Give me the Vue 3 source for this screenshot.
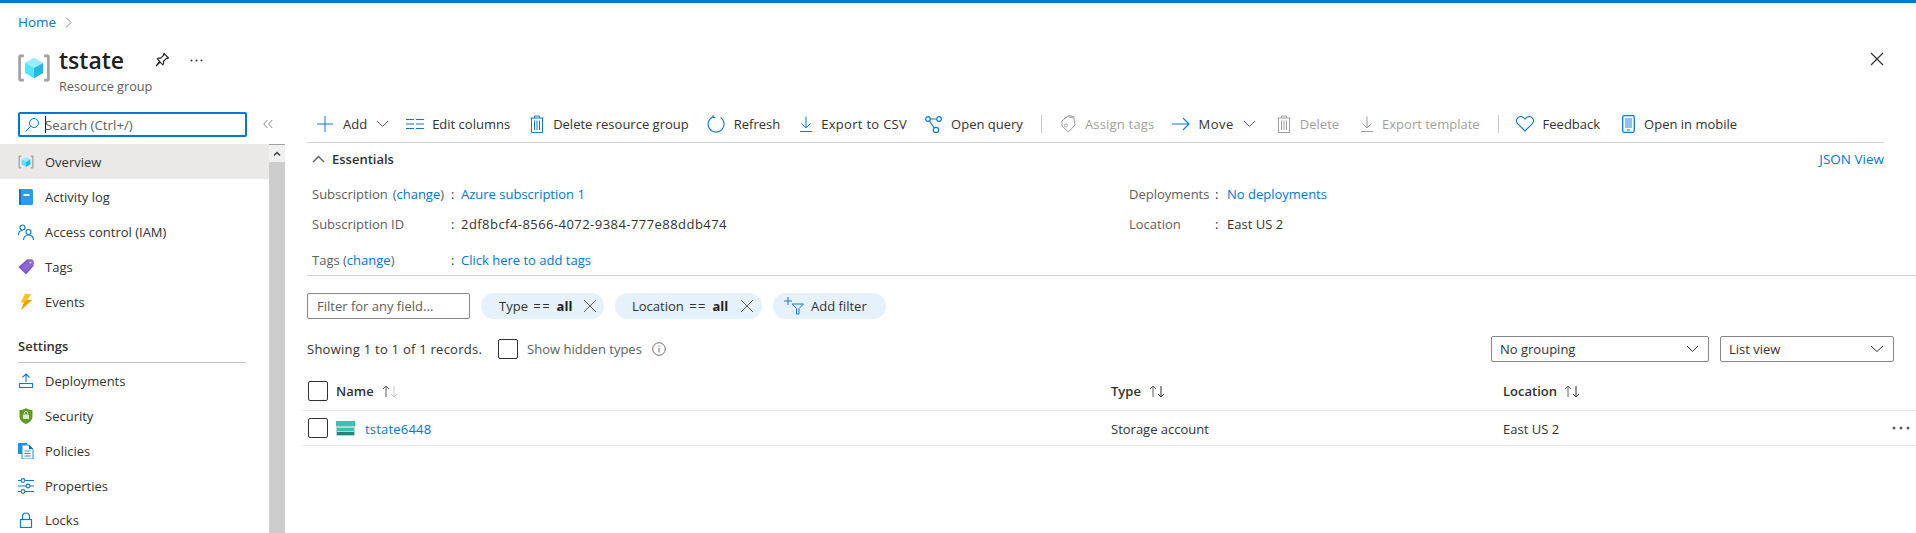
<script setup>
const nav1 = [
  { k: 'overview', t: 'Overview', active: true },
  { k: 'log', t: 'Activity log' },
  { k: 'iam', t: 'Access control (IAM)' },
  { k: 'tags', t: 'Tags' },
  { k: 'events', t: 'Events' },
]
const nav2 = [
  { k: 'deploy', t: 'Deployments' },
  { k: 'security', t: 'Security' },
  { k: 'policies', t: 'Policies' },
  { k: 'props', t: 'Properties' },
  { k: 'locks', t: 'Locks' },
]
</script>

<template>
  <div class="page">
    <div class="topline"></div>
    <div class="crumb"><a class="link">Home</a>
      <svg class="crumb-chev" width="7" height="11" viewBox="0 0 7 11"><path d="M1 .5l5 5-5 5" fill="none" stroke="#8a8886" stroke-width="1"/></svg>
    </div>
    <header class="head">
      <svg class="rg" width="36" height="36" viewBox="0 0 32 32">
        <path d="M7 4H4a2 2 0 0 0-2 2v20a2 2 0 0 0 2 2h3v-2.400H4.400V6.400H7z" fill="#a0a1a2"/>
        <path d="M25 4h3a2 2 0 0 1 2 2v20a2 2 0 0 1-2 2h-3v-2.400h2.600V6.400H25z" fill="#a0a1a2"/>
        <path d="M16 7l8 4.500v9L16 25l-8-4.500v-9z" fill="#50e6ff"/>
        <path d="M16 16l8-4.500v9L16 25z" fill="#29b6e0"/>
        <path d="M16 16l-8-4.500L16 7l8 4.500z" fill="#9cebff"/>
      </svg>
      <div class="titles">
        <div class="title-row">
          <h1>tstate</h1>
          <svg class="pin" width="16" height="16" viewBox="0 0 16 16"><path d="M10 1.500l4.500 4.500-1 .6-1-.3-3 3 .1 2.500-.9.9-2.500-2.500L2 14l3.700-4.700L3.300 6.900l.9-.9 2.500.1 3-3-.3-1z" fill="none" stroke="#201f1e" stroke-width="1.100"/></svg>
          <svg class="more" width="13" height="3" viewBox="0 0 13 3"><circle cx="1.500" cy="1.500" r="1" fill="#323130"/><circle cx="6.500" cy="1.500" r="1" fill="#323130"/><circle cx="11.500" cy="1.500" r="1" fill="#323130"/></svg>
        </div>
        <div class="sub">Resource group</div>
      </div>
      <svg class="close" width="14" height="14" viewBox="0 0 14 14"><path d="M1 1l12 12M13 1L1 13" stroke="#323130" stroke-width="1.200"/></svg>
    </header>

    <div class="body">
      <aside class="side">
        <div class="search-row">
          <div class="search">
            <svg width="16" height="16" viewBox="0 0 16 16"><circle cx="10" cy="6" r="4.500" fill="none" stroke="#0078d4"/><path d="M6.700 9.300L1.500 14.500" stroke="#0078d4"/></svg>
            <span class="caret"></span><span class="ph">Search (Ctrl+/)</span>
          </div>
          <svg class="collapse" width="10" height="10" viewBox="0 0 10 10"><path d="M4.500 1L.8 5l3.700 4M9.200 1L5.500 5l3.700 4" fill="none" stroke="#8a8886"/></svg>
        </div>
        <div class="navwrap">
          <nav class="nav">
            <template v-for="n in nav1" :key="n.k">
              <div class="item" :class="{ active: n.active }">
                <span class="ni">
                  <svg v-if="n.k === 'overview'" width="16" height="16" viewBox="1 1 30 30">
                    <path d="M7 4H4a2 2 0 0 0-2 2v20a2 2 0 0 0 2 2h3v-2.400H4.400V6.400H7z" fill="#a0a1a2"/><path d="M25 4h3a2 2 0 0 1 2 2v20a2 2 0 0 1-2 2h-3v-2.400h2.600V6.400H25z" fill="#a0a1a2"/>
                    <path d="M16 7l8 4.500v9L16 25l-8-4.500v-9z" fill="#50e6ff"/><path d="M16 16l8-4.500v9L16 25z" fill="#29b6e0"/><path d="M16 16l-8-4.500L16 7l8 4.500z" fill="#9cebff"/>
                  </svg>
                  <svg v-else-if="n.k === 'log'" width="16" height="16" viewBox="0 0 16 16">
                    <rect x="1" y="0" width="14" height="16" rx="1.500" fill="#2f9be8"/><rect x="1" y="0" width="2" height="16" rx="1" fill="#1a6fb5"/><rect x="5.500" y="5" width="6" height="2" fill="#fff"/>
                  </svg>
                  <svg v-else-if="n.k === 'iam'" width="16" height="16" viewBox="0 0 16 16" fill="none" stroke="#0f78d4" stroke-width="1.100">
                    <circle cx="4.500" cy="3.500" r="2.500"/><path d="M.5 11c0-3 1.500-4.500 4-4.500"/><circle cx="10.500" cy="8" r="2.500"/><path d="M5.500 16c0-3 2-5 5-5s5 2 5 5"/>
                  </svg>
                  <svg v-else-if="n.k === 'tags'" width="16" height="16" viewBox="0 0 16 16">
                    <path d="M9 .5h4.500a2 2 0 0 1 2 2V7L8 15.500.5 8z" fill="#7b52c9"/><path d="M11 .5h2.500a2 2 0 0 1 2 2V5L8 13 3 8z" fill="#8d67d9"/><circle cx="12.500" cy="3.500" r="1.100" fill="#d9c8f5"/>
                  </svg>
                  <svg v-else width="16" height="16" viewBox="0 0 16 16">
                    <path d="M7 0h6L9.500 6H14L3 16l3-7.500H2.500z" fill="#fcc419"/><path d="M9.500 6H14L3 16l3-7.500z" fill="#f59c0c"/>
                  </svg>
                </span>
                <span>{{ n.t }}</span>
              </div>
            </template>
            <div class="group">Settings</div>
            <div class="groupline"></div>
            <div v-for="n in nav2" :key="n.k" class="item tight">
              <span class="ni">
                <svg v-if="n.k === 'deploy'" width="16" height="16" viewBox="0 0 16 16" fill="none" stroke="#0f78d4" stroke-width="1.100">
                  <rect x="1.500" y="10.500" width="13" height="4"/><path d="M8 9V1M4.500 4.500L8 1l3.500 3.500"/>
                </svg>
                <svg v-else-if="n.k === 'security'" width="16" height="16" viewBox="0 0 16 16">
                  <path d="M8 0c2 1.500 3.800 2 6.500 2v6.500c0 3.500-3 6-6.500 7.500-3.500-1.500-6.500-4-6.500-7.500V2C4.200 2 6 1.500 8 0z" fill="#5e9c25"/>
                  <rect x="5" y="6.500" width="6" height="4.500" rx=".5" fill="#dcedc8"/><path d="M6.300 6.500V5.200a1.700 1.700 0 0 1 3.400 0v1.300" fill="none" stroke="#dcedc8"/>
                </svg>
                <svg v-else-if="n.k === 'policies'" width="16" height="16" viewBox="0 0 16 16">
                  <path d="M0 0h9v11H0z" fill="#1b93eb"/><path d="M4 2h7l4 4v10H4z" fill="#fff" stroke="#1b93eb"/><path d="M6.500 8h6M6.500 10.500h6M6.500 13h6" stroke="#1b93eb"/><path d="M11 2l4 4h-4z" fill="#0f6fc0"/>
                </svg>
                <svg v-else-if="n.k === 'props'" width="16" height="16" viewBox="0 0 16 16" fill="none" stroke="#0f78d4" stroke-width="1.100">
                  <path d="M0 2.500h3M7 2.500h9M0 8h8M12 8h4M0 13.500h3M7 13.500h9"/><circle cx="5" cy="2.500" r="1.900"/><circle cx="10" cy="8" r="1.900"/><circle cx="5" cy="13.500" r="1.900"/>
                </svg>
                <svg v-else width="16" height="16" viewBox="0 0 16 16" fill="none" stroke="#0f78d4" stroke-width="1.200">
                  <rect x="2.500" y="7.500" width="11" height="8"/><path d="M4.500 7.500V4.500a3.500 3.500 0 0 1 7 0v3"/>
                </svg>
              </span>
              <span>{{ n.t }}</span>
            </div>
          </nav>
          <div class="scroll">
            <div class="sbtn"><svg width="8" height="6" viewBox="0 0 8 6"><path d="M1 4.500L4 1.500l3 3" fill="none" stroke="#404040" stroke-width="1.500"/></svg></div>
            <div class="thumb"></div>
          </div>
        </div>
      </aside>

      <main class="main">
        <div class="toolbar">
          <button class="tb t-add">
            <svg width="18" height="18" viewBox="0 0 18 18"><path d="M9 1v16M1 9h16" stroke="#0f78d4"/></svg><span>Add</span>
            <svg class="chev" width="13" height="8" viewBox="0 0 13 8"><path d="M1 1l5.500 5.500L12 1" fill="none" stroke="#605e5c"/></svg>
          </button>
          <button class="tb t-edit">
            <svg width="18" height="14" viewBox="0 0 18 14"><path d="M0 2.500h8M10 2.500h8M0 7h8M10 7h8M0 11.500h8M10 11.500h8" stroke="#0f78d4"/></svg><span>Edit columns</span>
          </button>
          <button class="tb">
            <svg width="14" height="18" viewBox="0 0 14 18" fill="none" stroke="#0f78d4"><path d="M.5 3h13M4.500 3V1h5v2M1.500 3v14.500h11V3M4.500 5.500v9.500M7 5.500v9.500M9.500 5.500v9.500"/></svg><span>Delete resource group</span>
          </button>
          <button class="tb t-refresh">
            <svg width="18" height="18" viewBox="0 0 18 18" fill="none" stroke="#0f78d4" stroke-width="1.100"><path d="M5 2.200A8 8 0 1 0 12.500 1.800M5 .5v2.300h2.400" transform="rotate(8 9 9)"/></svg><span>Refresh</span>
          </button>
          <button class="tb t-csv">
            <svg width="12" height="16" viewBox="0 0 12 16" fill="none" stroke="#0f78d4"><path d="M6 .5V12M1.500 7.500L6 12l4.500-4.500M0 15.500h12"/></svg><span>Export to CSV</span>
          </button>
          <button class="tb">
            <svg width="17" height="17" viewBox="0 0 17 17" fill="none" stroke="#0f78d4" stroke-width="1.200"><circle cx="3" cy="3" r="2.300"/><circle cx="14" cy="3" r="2.300"/><circle cx="11" cy="14" r="2.700"/><path d="M5.300 3h6.400M4.500 5l4.800 7"/></svg><span>Open query</span>
          </button>
          <span class="sep"></span>
          <button class="tb dis t-assign">
            <svg width="15" height="18" viewBox="0 0 15 18" fill="none" stroke="#a19f9d"><path d="M1 6l5-4.500 7 1.500 1 7L7.500 17 1 11z"/><path d="M3 4l5-3.500 5.500 1.500M5 9a1.500 1.500 0 1 0 .1 0"/></svg><span>Assign tags</span>
          </button>
          <button class="tb t-move">
            <svg width="18" height="14" viewBox="0 0 18 14" fill="none" stroke="#0f78d4" stroke-width="1.100"><path d="M0 7h17M11 1l6 6-6 6"/></svg><span>Move</span>
            <svg class="chev" width="13" height="8" viewBox="0 0 13 8"><path d="M1 1l5.500 5.500L12 1" fill="none" stroke="#605e5c"/></svg>
          </button>
          <button class="tb dis t-del2">
            <svg width="14" height="18" viewBox="0 0 14 18" fill="none" stroke="#a19f9d"><path d="M.5 3h13M4.500 3V1h5v2M1.500 3v14.500h11V3M4.500 5.500v9.500M7 5.500v9.500M9.500 5.500v9.500"/></svg><span>Delete</span>
          </button>
          <button class="tb dis">
            <svg width="12" height="16" viewBox="0 0 12 16" fill="none" stroke="#a19f9d"><path d="M6 .5V12M1.500 7.500L6 12l4.500-4.500M0 15.500h12"/></svg><span>Export template</span>
          </button>
          <span class="sep sep2"></span>
          <button class="tb t-feed">
            <svg width="18" height="16" viewBox="0 0 18 16" fill="none" stroke="#0f78d4" stroke-width="1.200"><path d="M9 15L1.800 7.800a4.200 4.200 0 0 1 6-6L9 3l1.200-1.200a4.200 4.200 0 0 1 6 6z"/></svg><span>Feedback</span>
          </button>
          <button class="tb">
            <svg width="13" height="18" viewBox="0 0 13 18"><rect x=".7" y=".7" width="11.600" height="16.600" rx="1.500" fill="none" stroke="#0f78d4" stroke-width="1.300"/><rect x="3" y="3" width="7" height="10" fill="#8cc4ee"/><path d="M5 15h3" stroke="#0f78d4"/></svg><span>Open in mobile</span>
          </button>
        </div>

        <div class="ess-head">
          <svg width="13" height="8" viewBox="0 0 13 8"><path d="M1 7l5.500-5.500L12 7" fill="none" stroke="#605e5c" stroke-width="1.400"/></svg>
          <span class="ess-title">Essentials</span>
          <a class="link json">JSON View</a>
        </div>

        <div class="ess">
          <div class="col col-l">
            <div class="kv h30"><span class="k">Subscription <span class="k2 k2-sub">(<a class="link">change</a>)</span></span><span class="c">:</span><a class="link">Azure subscription 1</a></div>
            <div class="kv h30"><span class="k">Subscription ID</span><span class="c">:</span><span class="v guid">2df8bcf4-8566-4072-9384-777e88ddb474</span></div>
            <div class="kv h30 tagsrow"><span class="k">Tags <span class="k2">(<a class="link">change</a>)</span></span><span class="c">:</span><a class="link">Click here to add tags</a></div>
          </div>
          <div class="col col-r">
            <div class="kv2 h30"><span class="k">Deployments</span><span class="c">:</span><a class="link">No deployments</a></div>
            <div class="kv2 h30"><span class="k">Location</span><span class="c">:</span><span class="v">East US 2</span></div>
          </div>
        </div>

        <div class="filters">
          <div class="filter-input">Filter for any field...</div>
          <div class="pill p-type"><span>Type <span class="eq">==</span> <b>all</b></span>
            <svg width="14" height="14" viewBox="0 0 14 14"><path d="M1 1l12 12M13 1L1 13" stroke="#605e5c"/></svg></div>
          <div class="pill p-loc"><span>Location <span class="eq">==</span> <b>all</b></span>
            <svg width="14" height="14" viewBox="0 0 14 14"><path d="M1 1l12 12M13 1L1 13" stroke="#605e5c"/></svg></div>
          <div class="pill p-add">
            <svg width="20" height="18" viewBox="0 0 20 18" fill="none" stroke="#0f78d4"><path d="M4 0v8M0 4h8M8 7h11.500l-4.500 4.500V17h-2.500v-5.500z"/></svg>
            <span>Add filter</span>
          </div>
        </div>

        <div class="records">
          <span class="showing">Showing 1 to 1 of 1 records.</span>
          <span class="cb"></span>
          <span class="hidden-t">Show hidden types</span>
          <svg width="14" height="14" viewBox="0 0 14 14" fill="none" stroke="#605e5c" stroke-width=".9"><circle cx="7" cy="7" r="6.300"/><path d="M7 6v4.500M7 3.500v1.200"/></svg>
          <div class="grow"></div>
          <div class="select s1"><span>No grouping</span><svg width="13" height="8" viewBox="0 0 13 8"><path d="M1 1l5.500 5.500L12 1" fill="none" stroke="#323130"/></svg></div>
          <div class="select s2"><span>List view</span><svg width="14" height="8" viewBox="0 0 14 8"><path d="M1 1l6 5.500L13 1" fill="none" stroke="#323130"/></svg></div>
        </div>

        <div class="thead trow">
          <div class="cell-name"><span class="cb"></span><b>Name</b>
            <svg width="18" height="13" viewBox="0 0 18 13" fill="none"><path d="M5 12V1M2 4l3-3 3 3" stroke="#605e5c"/><path d="M13 1v11M10 9l3 3 3-3" stroke="#c8c6c4"/></svg>
          </div>
          <div class="cell-type"><b>Type</b>
            <svg width="18" height="13" viewBox="0 0 18 13" fill="none"><path d="M5 12V1M2 4l3-3 3 3" stroke="#605e5c"/><path d="M13 1v11M10 9l3 3 3-3" stroke="#323130"/></svg>
          </div>
          <div class="cell-loc"><b>Location</b>
            <svg width="18" height="13" viewBox="0 0 18 13" fill="none"><path d="M5 12V1M2 4l3-3 3 3" stroke="#605e5c"/><path d="M13 1v11M10 9l3 3 3-3" stroke="#323130"/></svg>
          </div>
        </div>
        <div class="tbody trow">
          <div class="cell-name"><span class="cb"></span>
            <svg class="sa" width="19" height="15" viewBox="0 0 19 15"><rect width="19" height="15" fill="#c8cdd0"/><rect width="19" height="5" fill="#37c2b1"/><rect x="1" y="7" width="17" height="3" fill="#37c2b1"/><rect x="1" y="11" width="17" height="3" fill="#258277"/></svg>
            <a class="link rowlink">tstate6448</a>
          </div>
          <div class="cell-type rowtext">Storage account</div>
          <div class="cell-loc rowtext">East US 2</div>
          <svg class="dots" width="18" height="4" viewBox="0 0 18 4"><circle cx="2" cy="2" r="1.500" fill="#605e5c"/><circle cx="9" cy="2" r="1.500" fill="#605e5c"/><circle cx="16" cy="2" r="1.500" fill="#605e5c"/></svg>
        </div>
      </main>
    </div>
  </div>
</template>

<style>
html, body { margin: 0; background: #fff; overflow: hidden; }
</style>

<style scoped>
.page { width: 1916px; height: 533px; overflow: hidden; font-family: "Open Sans", "Noto Sans", sans-serif; font-size: 13px; color: #323130; display: flex; flex-direction: column; }
.topline { height: 3px; background: #0078d4; flex: none; }
.link { color: #0078d4; text-decoration: none; }
.crumb { height: 38px; flex: none; padding-left: 18px; display: flex; align-items: center; gap: 9px; font-size: 13.500px; box-sizing: border-box; }
.head { height: 71px; flex: none; display: flex; align-items: flex-start; position: relative; padding-left: 16px; box-sizing: border-box; }
.rg { margin-top: 9px; }
.titles { margin-left: 7px; margin-top: 3px; }
.title-row { display: flex; align-items: center; height: 32px; }
h1 { margin: 0; font-size: 23px; font-weight: 600; color: #201f1e; width: 95px; line-height: 32px; }
.more { margin-left: 20px; }
.sub { font-size: 12.700px; color: #605e5c; margin-top: 2px; line-height: 16px; }
.close { position: absolute; right: 32px; top: 11px; }
.body { flex: 1; display: flex; min-height: 0; }
.side { width: 285px; flex: none; display: flex; flex-direction: column; }
.search-row { height: 32px; flex: none; display: flex; align-items: flex-start; padding-left: 18px; box-sizing: border-box; }
.search { width: 229px; height: 25px; border: 2px solid #0078d4; border-radius: 2px; display: flex; align-items: center; padding-left: 4px; font-size: 13.300px; color: #605e5c; box-sizing: border-box; }
.caret { width: 1px; height: 17px; background: #201f1e; margin-left: 5px; margin-right: -1px; }
.collapse { margin-left: 16px; margin-top: 7px; }
.navwrap { flex: 1; display: flex; min-height: 0; }
.nav { width: 269px; flex: none; }
.item { height: 35px; display: flex; align-items: center; padding-left: 18px; font-size: 13px; color: #323130; }
.item.tight { height: 34.750px; }
.item.active { background: #ebe9e7; }
.ni { width: 16px; height: 16px; margin-right: 11px; display: flex; }
.group { height: 35px; margin-top: 9px; padding-left: 18px; display: flex; align-items: center; font-size: 13px; font-weight: 600; color: #323130; }
.groupline { height: 1px; background: #c8c6c4; margin: -1px 23px 1px 18px; }
.scroll { width: 16px; flex: none; background: #cdcdcd; }
.sbtn { height: 17px; background: #f0f0f0; border-top: 1px solid #a0a0a0; display: flex; align-items: center; justify-content: center; }
.main { flex: 1; min-width: 0; padding-left: 22px; }
.toolbar { height: 31px; margin-right: 32px; border-bottom: 1px solid #d2d0ce; display: flex; align-items: center; box-sizing: border-box; padding: 0 0 6px 9px; }
.tb { all: unset; display: flex; align-items: center; gap: 9px; margin-right: 18px; font-family: "Open Sans", sans-serif; font-size: 13px; color: #323130; white-space: nowrap; }
.tb.dis { color: #a19f9d; }
.t-add { margin-right: 17px; }
.t-edit { margin-right: 20px; gap: 8px; }
.t-refresh { margin-right: 20px; }
.t-csv span { letter-spacing: .3px; }
.t-assign { margin-right: 17px; }
.t-assign span { letter-spacing: .2px; }
.t-move { margin-right: 21px; }
.t-move span { letter-spacing: .5px; }
.t-del2 { margin-right: 22px; }
.t-feed { margin-right: 22px; }
.sep { width: 1px; height: 18px; background: #c8c6c4; margin: 0 19px 0 0; }
.sep2 { margin-right: 17px; }
.ess-head { height: 31px; padding-bottom: 2px; display: flex; align-items: center; padding-left: 5px; margin-right: 32px; gap: 7px; }
.ess-title { font-weight: 600; color: #323130; }
.json { margin-left: auto; font-size: 13.500px; }
.ess { display: flex; height: 100px; border-bottom: 1px solid #d2d0ce; box-sizing: border-box; padding-top: 3px; }
.col-l { width: 822px; padding-left: 5px; box-sizing: border-box; }
.kv { display: grid; grid-template-columns: 139px 10px auto; justify-content: start; align-items: center; }
.kv2 { display: grid; grid-template-columns: 86px 12px auto; justify-content: start; align-items: center; }
.h30 { height: 30px; }
.tagsrow { margin-top: 6px; }
.k { color: #605e5c; white-space: nowrap; }
.k2-sub { margin-left: 1.500px; }
.guid { letter-spacing: .45px; }
.filters { height: 60px; display: flex; align-items: center; }
.filter-input { width: 163px; height: 26px; border: 1px solid #8a8886; border-radius: 2px; padding-left: 9px; color: #605e5c; box-sizing: border-box; display: flex; align-items: center; margin-right: 11px; }
.pill { height: 26px; border-radius: 13px; background: #e5f1fb; display: flex; align-items: center; box-sizing: border-box; margin-right: 11px; color: #323130; }
.p-type { width: 123px; padding: 0 7px 0 18px; justify-content: space-between; }
.p-loc { width: 147px; padding: 0 8px 0 17px; justify-content: space-between; }
.p-add { width: 113px; padding: 0 0 0 11px; gap: 7px; }
.eq { margin: 0 2px; letter-spacing: 1.500px; }
.pill b { font-weight: 700; color: #201f1e; }
.records { height: 26px; display: flex; align-items: center; margin-right: 22px; }
.showing { margin-right: 16px; letter-spacing: .25px; }
.cb { width: 20px; height: 20px; border: 1px solid #323130; border-radius: 2px; box-sizing: border-box; flex: none; }
.hidden-t { margin: 0 10px 0 9px; color: #605e5c; }
.grow { flex: 1; }
.select { height: 26px; border: 1px solid #8a8886; border-radius: 2px; box-sizing: border-box; display: flex; align-items: center; justify-content: space-between; padding: 0 9px 0 8px; }
.s1 { width: 218px; margin-right: 11px; }
.s2 { width: 174px; }
.trow { position: relative; display: flex; align-items: center; margin-left: -6px; }
.thead { height: 49px; border-bottom: 1px solid #edebe9; box-sizing: border-box; padding-top: 10px; }
.tbody { height: 35px; border-bottom: 1px solid #edebe9; box-sizing: border-box; }
.thead b { font-weight: 600; color: #323130; }
.cell-name { width: 810px; padding-left: 7px; box-sizing: border-box; display: flex; align-items: center; }
.cell-name .cb { margin-right: 8px; }
.cell-name svg { margin-left: 7px; }
.cell-name .sa { margin-left: 0; margin-right: 10px; }
.cell-type { width: 392px; display: flex; align-items: center; gap: 7px; }
.cell-loc { display: flex; align-items: center; gap: 6px; }
.rowtext, .rowlink { padding-top: 2px; }
.rowlink { letter-spacing: .2px; }
.dots { position: absolute; right: 6px; top: 15px; }
</style>
